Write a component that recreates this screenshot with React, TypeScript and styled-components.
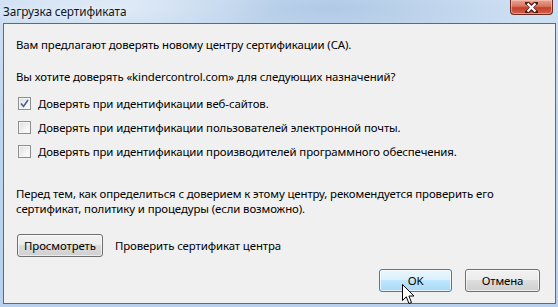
import React from 'react'
import styled, { createGlobalStyle } from 'styled-components'

const GlobalStyle = createGlobalStyle`
  html, body {
    margin: 0;
    padding: 0;
    background: #bcd4ee;
  }
  * {
    box-sizing: border-box;
  }
`

const StyledWindow = styled.div`
  position: relative;
  width: 558px;
  height: 307px;
  display: flex;
  flex-direction: column;
  padding: 0 2px 3px 3px;
  font-family: 'Noto Sans', 'Open Sans', sans-serif;
  font-size: 11.4px;
  letter-spacing: -0.1px;
  color: #000;
  background:
    radial-gradient(ellipse 160px 30px at 120px 6px, rgba(255, 255, 255, 0.35), transparent),
    radial-gradient(ellipse 200px 40px at 330px 8px, rgba(120, 160, 205, 0.35), transparent),
    linear-gradient(to bottom, #cfe0f3 0%, #bdd5ef 40%, #b7d1ee 100%);
  overflow: hidden;
`

const StyledTitleBar = styled.div`
  height: 23px;
  display: flex;
  justify-content: space-between;
  align-items: flex-start;
  flex-shrink: 0;
`

const StyledTitle = styled.div`
  padding-top: 3px;
  line-height: 16px;
  font-size: 11.8px;
  color: #101820;
  text-shadow: 0 0 6px rgba(255, 255, 255, 0.9);
`

const StyledCloseButton = styled.div`
  width: 43px;
  height: 15px;
  margin-right: 3px;
  display: flex;
  align-items: center;
  justify-content: center;
  border: 1px solid #6b2a21;
  border-top: none;
  border-radius: 0 0 4px 4px;
  background: linear-gradient(to bottom, #e8a493 0%, #d9735e 45%, #c4402a 55%, #d3624a 100%);
  box-shadow: inset 0 0 0 1px rgba(255, 210, 200, 0.5);
`

const StyledPanel = styled.div`
  flex: 1;
  display: flex;
  flex-direction: column;
  background: #f0f0f0;
  border: 1px solid #5e6a78;
  padding: 13px 15px 11px 12px;
  line-height: 15px;
`

const StyledText = styled.div<{ $gap?: number }>`
  margin-top: ${(p) => p.$gap ?? 0}px;
`

const StyledCheckList = styled.div`
  margin-top: 7px;
  display: flex;
  flex-direction: column;
  padding-left: 2px;
`

const StyledCheckRow = styled.label`
  height: 24px;
  line-height: 15px;
  display: flex;
  align-items: center;
  gap: 7px;
`

const StyledBox = styled.span`
  width: 13px;
  height: 13px;
  flex-shrink: 0;
  display: flex;
  align-items: center;
  justify-content: center;
  border: 1px solid #8e8f8f;
  background: linear-gradient(135deg, #dcdcdc 0%, #f4f4f4 60%, #ffffff 100%);
  box-shadow: inset 0 0 0 1px #f4f4f4;
`

const StyledActionRow = styled.div`
  margin-top: 18px;
  display: flex;
  align-items: center;
  gap: 12px;
  padding-left: 1px;
`

const StyledFooter = styled.div`
  margin-top: auto;
  display: flex;
  justify-content: flex-end;
  gap: 13px;
`

const StyledButton = styled.div<{ $width: number; $hot?: boolean }>`
  width: ${(p) => p.$width}px;
  height: 23px;
  display: flex;
  align-items: center;
  justify-content: center;
  border-radius: 3px;
  border: 1px solid ${(p) => (p.$hot ? '#3c7fb1' : '#707070')};
  background: ${(p) =>
    p.$hot
      ? 'linear-gradient(to bottom, #eaf6fd 0%, #d9f0fc 50%, #bee6fd 50%, #a7d9f5 100%)'
      : 'linear-gradient(to bottom, #f2f2f2 0%, #ebebeb 50%, #dddddd 50%, #cfcfcf 100%)'};
  box-shadow: inset 0 0 0 1px ${(p) => (p.$hot ? 'rgba(255,255,255,0.7)' : 'rgba(255,255,255,0.6)')};
`

const StyledCursor = styled.svg`
  position: absolute;
  left: 402px;
  top: 284px;
`

const checks = [
  { label: 'Доверять при идентификации веб-сайтов.', checked: true },
  { label: 'Доверять при идентификации пользователей электронной почты.', checked: false },
  { label: 'Доверять при идентификации производителей программного обеспечения.', checked: false },
]

const App: React.FunctionComponent = () => {
  return (
    <StyledWindow>
      <GlobalStyle />
      <StyledTitleBar>
        <StyledTitle>Загрузка сертификата</StyledTitle>
        <StyledCloseButton>
          <svg width="13" height="11" viewBox="0 0 13 11">
            <path
              d="M2 1 L6.5 4.6 L11 1 M2 10 L6.5 6.4 L11 10"
              stroke="#4a1a14"
              strokeWidth="4"
              fill="none"
              strokeLinecap="round"
            />
            <path d="M2.5 1.5 L10.5 9.5 M10.5 1.5 L2.5 9.5" stroke="#ffffff" strokeWidth="2.2" fill="none" />
          </svg>
        </StyledCloseButton>
      </StyledTitleBar>
      <StyledPanel>
        <StyledText>Вам предлагают доверять новому центру сертификации (CA).</StyledText>
        <StyledText $gap={17}>Вы хотите доверять «kindercontrol.com» для следующих назначений?</StyledText>
        <StyledCheckList>
          {checks.map((item) => (
            <StyledCheckRow key={item.label}>
              <StyledBox>
                {item.checked && (
                  <svg width="9" height="9" viewBox="0 0 9 9">
                    <path d="M1 4.5 L3.5 7.5 L8 1" stroke="#4b5d95" strokeWidth="1.6" fill="none" />
                  </svg>
                )}
              </StyledBox>
              {item.label}
            </StyledCheckRow>
          ))}
        </StyledCheckList>
        <StyledText $gap={23}>
          Перед тем, как определиться с доверием к этому центру, рекомендуется проверить его
          <br />
          сертификат, политику и процедуры (если возможно).
        </StyledText>
        <StyledActionRow>
          <StyledButton $width={86}>Просмотреть</StyledButton>
          Проверить сертификат центра
        </StyledActionRow>
        <StyledFooter>
          <StyledButton $width={73} $hot>
            OK
          </StyledButton>
          <StyledButton $width={75}>Отмена</StyledButton>
        </StyledFooter>
      </StyledPanel>
      <StyledCursor width="14" height="22" viewBox="0 0 14 22">
        <path
          d="M0.5 0.5 L0.5 16.5 L4.3 12.8 L7 19.5 L9.5 18.5 L6.9 12 L12 12 Z"
          fill="#ffffff"
          stroke="#000000"
          strokeWidth="1"
          strokeLinejoin="round"
        />
      </StyledCursor>
    </StyledWindow>
  )
}

export default App
